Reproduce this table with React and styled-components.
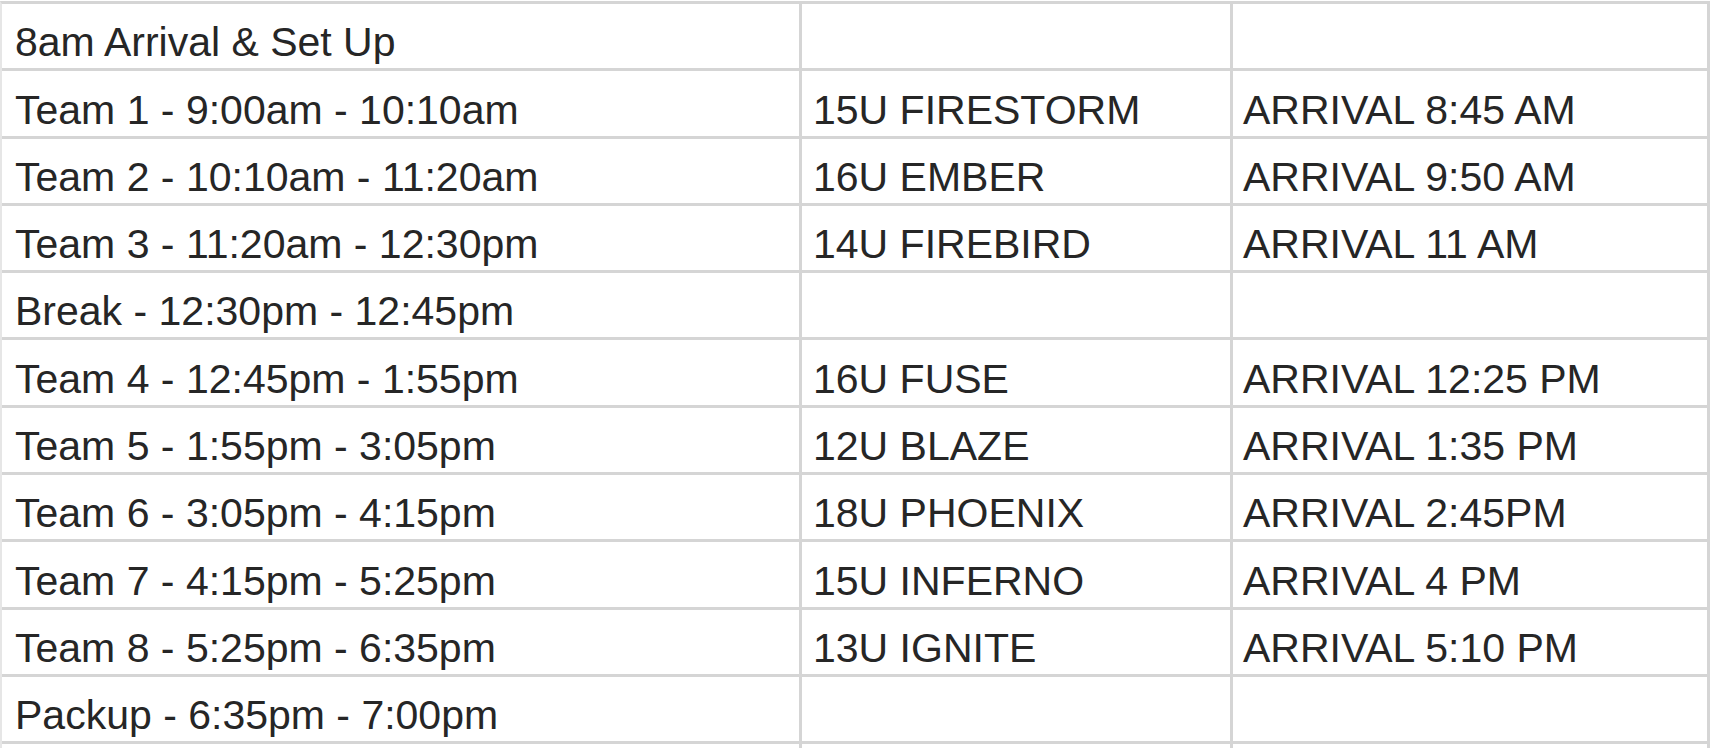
import styled, { createGlobalStyle } from "styled-components";

const rows = [
  ["8am Arrival & Set Up", "", ""],
  ["Team 1 - 9:00am - 10:10am", "15U FIRESTORM", "ARRIVAL 8:45 AM"],
  ["Team 2 - 10:10am - 11:20am", "16U EMBER", "ARRIVAL 9:50 AM"],
  ["Team 3 - 11:20am - 12:30pm", "14U FIREBIRD", "ARRIVAL 11 AM"],
  ["Break - 12:30pm - 12:45pm", "", ""],
  ["Team 4 - 12:45pm - 1:55pm", "16U FUSE", "ARRIVAL 12:25 PM"],
  ["Team 5 - 1:55pm - 3:05pm", "12U BLAZE", "ARRIVAL 1:35 PM"],
  ["Team 6 - 3:05pm - 4:15pm", "18U PHOENIX", "ARRIVAL 2:45PM"],
  ["Team 7 - 4:15pm - 5:25pm", "15U INFERNO", "ARRIVAL 4 PM"],
  ["Team 8 - 5:25pm - 6:35pm", "13U IGNITE", "ARRIVAL 5:10 PM"],
  ["Packup - 6:35pm - 7:00pm", "", ""],
  ["", "", ""],
];

const GlobalStyle = createGlobalStyle`
  html, body {
    margin: 0;
    padding: 0;
    background: #ffffff;
    overflow: hidden;
  }
  body {
    font-family: "Liberation Sans", Arial, sans-serif;
  }
`;

const Page = styled.div`
  width: 1712px;
  height: 748px;
  overflow: hidden;
  padding-top: 1px;
  box-sizing: border-box;
`;

const Sheet = styled.div`
  display: grid;
  grid-template-columns: 800px 431px 477px;
  grid-auto-rows: 67.3px;
  border-top: 3px solid #d5d5d5;
  border-left: 2px solid #e6e6e6;
  width: 1710px;
  box-sizing: border-box;
`;

const Cell = styled.div`
  display: flex;
  align-items: flex-end;
  box-sizing: border-box;
  padding: 0 0 5px ${(p) => p.$pad}px;
  border-right: 3px solid #d5d5d5;
  border-bottom: 3px solid #d5d5d5;
  font-size: 41px;
  line-height: 41px;
  color: #262626;
  white-space: nowrap;
  overflow: hidden;
`;

const pads = [13, 11, 10];

export default function App() {
  return (
    <>
      <GlobalStyle />
      <Page>
        <Sheet>
          {rows.map((row, i) =>
            row.map((text, j) => (
              <Cell key={`${i}-${j}`} $pad={pads[j]}>
                {text}
              </Cell>
            ))
          )}
        </Sheet>
      </Page>
    </>
  );
}
